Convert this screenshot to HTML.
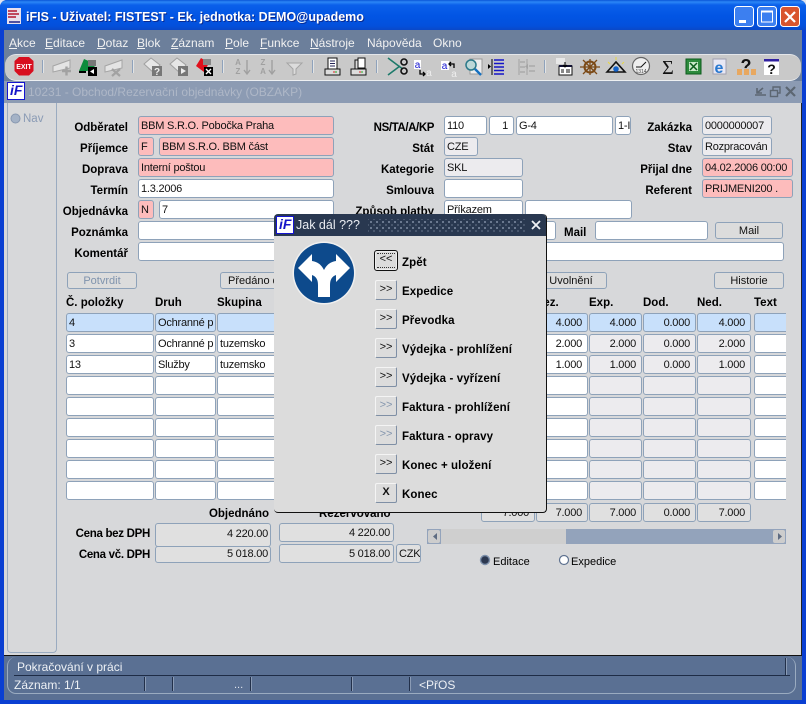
<!DOCTYPE html>
<html><head><meta charset="utf-8"><style>
html,body{margin:0;padding:0;background:#dfe4f0}
#w{position:relative;width:806px;height:704px;overflow:hidden;font:11px "Liberation Sans",sans-serif;color:#000}
#w div,#w span.a{position:absolute;box-sizing:border-box}
.f{border:1px solid #8ea2b9;border-radius:3px;height:19px;background:#fff;line-height:18px;padding-left:2px;white-space:nowrap;overflow:hidden;font-size:11px;letter-spacing:-.22px;color:#111}
.p{background:#fdbcbc}
.g{background:#ecebee}
.d{background:#e0e0e0}
.b{background:#c8e0fb}
.r{text-align:right;padding:0 5px 0 0}
.l{font-weight:bold;font-size:11.5px;text-align:right;white-space:nowrap;line-height:14px;height:14px}
.h{font-weight:bold;font-size:11.5px;white-space:nowrap;line-height:14px;height:14px;top:296px}
.m{top:36px;color:#f2f2f2;font-size:12px;line-height:14px;white-space:nowrap}
.bt{border:1px solid #8ea2b9;border-radius:3px;height:17px;line-height:16px;text-align:center;font-size:11px;background:#dcdcdc;white-space:nowrap;overflow:hidden;color:#111}
.db{left:375px;width:22px;height:20px;border:1px solid;border-color:#f4f4f4 #7f8fa5 #7f8fa5 #f4f4f4;border-radius:2px;background:#dcdcdc;text-align:center;font-size:11px;line-height:17px;color:#111}
.dl{left:402px;font-weight:bold;font-size:11.5px;line-height:14px;white-space:nowrap;letter-spacing:.1px}
.s{width:1px;background:#22304a;top:677px;height:14px;box-shadow:1px 0 0 #8a9bb5}
</style></head><body><div id="w">

<div style="left:0;top:0;width:806px;height:704px;background:#0a3fd2;border-radius:7px 7px 0 0"></div>
<div style="left:0;top:0;width:806px;height:30px;border-radius:7px 7px 0 0;background:linear-gradient(#0a55d8 0,#2b86f6 2px,#0a60ea 5px,#0255e4 16px,#0350dc 26px,#0a48c8 30px)"></div>
<div style="left:26px;top:9px;color:#fff;font-weight:bold;font-size:12.5px;line-height:16px;white-space:nowrap;text-shadow:1px 1px 0 #0a2a90">iFIS - Uživatel: FISTEST - Ek. jednotka: DEMO@upademo</div>

<div style="left:4px;top:30px;width:798px;height:24px;background:#6c7f9b"></div>
<div class="m" style="left:9px"><u>A</u>kce</div>
<div class="m" style="left:45px"><u>E</u>ditace</div>
<div class="m" style="left:97px"><u>D</u>otaz</div>
<div class="m" style="left:137px"><u>B</u>lok</div>
<div class="m" style="left:171px"><u>Z</u>áznam</div>
<div class="m" style="left:225px"><u>P</u>ole</div>
<div class="m" style="left:260px"><u>F</u>unkce</div>
<div class="m" style="left:310px"><u>N</u>ástroje</div>
<div class="m" style="left:367px">Nápověda</div>
<div class="m" style="left:433px">Okno</div>

<div style="left:4px;top:50px;width:798px;height:32px;background:#6c7f9b"></div>
<div style="left:5px;top:54px;width:796px;height:27px;background:#c9c9c9;border-radius:11px;border-bottom:1px solid #eef0f2;border-top:1px solid #e4e6ea"></div>

<div style="left:4px;top:81px;width:798px;height:22px;background:#8c9bb3"></div>
<div style="left:7px;top:82px;width:18px;height:18px;background:#fff;border:1px solid #1414d0"></div>
<div style="left:10px;top:82px;width:15px;height:17px;color:#1414c8;font:italic bold 14px/17px 'Liberation Sans',sans-serif">iF</div>
<div style="left:28px;top:85px;color:#aeb7c7;font-size:12px;line-height:14px;white-space:nowrap">10231 - Obchod/Rezervační objednávky (OBZAKP)</div>

<div style="left:4px;top:103px;width:798px;height:553px;background:#d7d8da;border-bottom:1px solid #111;border-right:1px solid #222"></div>
<div style="left:7px;top:103px;width:50px;height:550px;background:#d7d8da;border:1px solid #9aabc0;border-top:0;border-radius:0 0 4px 4px"></div>
<div style="left:23px;top:112px;color:#8a9bb5;font-size:11.5px;line-height:14px">Nav</div>

<div class="l" style="right:678px;top:121px">Odběratel</div>
<div class="l" style="right:678px;top:142px">Příjemce</div>
<div class="l" style="right:678px;top:163px">Doprava</div>
<div class="l" style="right:678px;top:184px">Termín</div>
<div class="l" style="right:678px;top:205px">Objednávka</div>
<div class="l" style="right:678px;top:226px">Poznámka</div>
<div class="l" style="right:678px;top:247px">Komentář</div>

<div class="f p" style="left:138px;top:116px;width:196px">BBM S.R.O. Pobočka Praha</div>
<div class="f p" style="left:138px;top:137px;width:16px">F</div>
<div class="f p" style="left:159px;top:137px;width:175px">BBM S.R.O. BBM část</div>
<div class="f p" style="left:138px;top:158px;width:196px">Interní poštou</div>
<div class="f" style="left:138px;top:179px;width:196px">1.3.2006</div>
<div class="f p" style="left:138px;top:200px;width:16px">N</div>
<div class="f" style="left:159px;top:200px;width:175px">7</div>
<div class="f" style="left:138px;top:221px;width:418px"></div>
<div class="f" style="left:138px;top:242px;width:646px"></div>

<div class="l" style="right:372px;top:121px;letter-spacing:-.4px">NS/TA/A/KP</div>
<div class="l" style="right:372px;top:142px">Stát</div>
<div class="l" style="right:372px;top:163px">Kategorie</div>
<div class="l" style="right:372px;top:184px">Smlouva</div>
<div class="l" style="right:372px;top:205px">Způsob platby</div>

<div class="f" style="left:444px;top:116px;width:43px">110</div>
<div class="f r" style="left:489px;top:116px;width:25px">1</div>
<div class="f" style="left:516px;top:116px;width:97px">G-4</div>
<div class="f" style="left:615px;top:116px;width:16px">1-I</div>
<div class="f g" style="left:444px;top:137px;width:34px">CZE</div>
<div class="f g" style="left:444px;top:158px;width:79px">SKL</div>
<div class="f" style="left:444px;top:179px;width:79px"></div>
<div class="f" style="left:444px;top:200px;width:79px">Příkazem</div>
<div class="f" style="left:525px;top:200px;width:107px"></div>

<div class="l" style="right:114px;top:121px">Zakázka</div>
<div class="l" style="right:114px;top:142px">Stav</div>
<div class="l" style="right:114px;top:163px">Přijal dne</div>
<div class="l" style="right:114px;top:184px">Referent</div>
<div class="l" style="left:564px;top:226px">Mail</div>
<div class="f g" style="left:702px;top:116px;width:70px">0000000007</div>
<div class="f g" style="left:702px;top:137px;width:70px">Rozpracován</div>
<div class="f p" style="left:702px;top:158px;width:91px">04.02.2006 00:00</div>
<div class="f p" style="left:702px;top:179px;width:91px">PRIJMENI200 .</div>
<div class="f" style="left:595px;top:221px;width:113px"></div>
<div class="bt" style="left:715px;top:222px;width:68px">Mail</div>

<div class="bt" style="left:67px;top:272px;width:70px;color:#7f93ad">Potvrdit</div>
<div class="bt" style="left:220px;top:272px;width:100px;text-align:left;padding-left:7px">Předáno do</div>
<div class="bt" style="left:520px;top:272px;width:87px;padding-left:15px">Uvolnění</div>
<div class="bt" style="left:714px;top:272px;width:70px">Historie</div>

<div class="h" style="left:66px">Č. položky</div>
<div class="h" style="left:155px">Druh</div>
<div class="h" style="left:217px">Skupina</div>
<div class="h" style="left:535px">Rez.</div>
<div class="h" style="left:589px">Exp.</div>
<div class="h" style="left:643px">Dod.</div>
<div class="h" style="left:697px">Ned.</div>
<div class="h" style="left:754px">Text</div>

<!-- row 1 -->
<div class="f b" style="left:66px;top:313px;width:88px">4</div><div class="f b" style="left:155px;top:313px;width:61px">Ochranné p</div><div class="f b" style="left:217px;top:313px;width:120px"></div><div class="f b r" style="left:530px;top:313px;width:58px">4.000</div><div class="f b r" style="left:589px;top:313px;width:53px">4.000</div><div class="f b r" style="left:643px;top:313px;width:53px">0.000</div><div class="f b r" style="left:697px;top:313px;width:54px">4.000</div><div class="f b" style="left:754px;top:313px;width:32px;border-right:0;border-radius:3px 0 0 3px"></div>
<!-- row 2 -->
<div class="f" style="left:66px;top:334px;width:88px">3</div><div class="f" style="left:155px;top:334px;width:61px">Ochranné p</div><div class="f" style="left:217px;top:334px;width:120px">tuzemsko</div><div class="f r" style="left:530px;top:334px;width:58px">2.000</div><div class="f g r" style="left:589px;top:334px;width:53px">2.000</div><div class="f g r" style="left:643px;top:334px;width:53px">0.000</div><div class="f g r" style="left:697px;top:334px;width:54px">2.000</div><div class="f" style="left:754px;top:334px;width:32px;border-right:0;border-radius:3px 0 0 3px"></div>
<!-- row 3 -->
<div class="f" style="left:66px;top:355px;width:88px">13</div><div class="f" style="left:155px;top:355px;width:61px">Služby</div><div class="f" style="left:217px;top:355px;width:120px">tuzemsko</div><div class="f r" style="left:530px;top:355px;width:58px">1.000</div><div class="f g r" style="left:589px;top:355px;width:53px">1.000</div><div class="f g r" style="left:643px;top:355px;width:53px">0.000</div><div class="f g r" style="left:697px;top:355px;width:54px">1.000</div><div class="f" style="left:754px;top:355px;width:32px;border-right:0;border-radius:3px 0 0 3px"></div>
<!-- empty rows -->
<div class="f" style="left:66px;top:376px;width:88px"></div><div class="f" style="left:155px;top:376px;width:61px"></div><div class="f" style="left:217px;top:376px;width:120px"></div><div class="f" style="left:530px;top:376px;width:58px"></div><div class="f g" style="left:589px;top:376px;width:53px"></div><div class="f g" style="left:643px;top:376px;width:53px"></div><div class="f g" style="left:697px;top:376px;width:54px"></div><div class="f" style="left:754px;top:376px;width:32px;border-right:0;border-radius:3px 0 0 3px"></div>
<div class="f" style="left:66px;top:397px;width:88px"></div><div class="f" style="left:155px;top:397px;width:61px"></div><div class="f" style="left:217px;top:397px;width:120px"></div><div class="f" style="left:530px;top:397px;width:58px"></div><div class="f g" style="left:589px;top:397px;width:53px"></div><div class="f g" style="left:643px;top:397px;width:53px"></div><div class="f g" style="left:697px;top:397px;width:54px"></div><div class="f" style="left:754px;top:397px;width:32px;border-right:0;border-radius:3px 0 0 3px"></div>
<div class="f" style="left:66px;top:418px;width:88px"></div><div class="f" style="left:155px;top:418px;width:61px"></div><div class="f" style="left:217px;top:418px;width:120px"></div><div class="f" style="left:530px;top:418px;width:58px"></div><div class="f g" style="left:589px;top:418px;width:53px"></div><div class="f g" style="left:643px;top:418px;width:53px"></div><div class="f g" style="left:697px;top:418px;width:54px"></div><div class="f" style="left:754px;top:418px;width:32px;border-right:0;border-radius:3px 0 0 3px"></div>
<div class="f" style="left:66px;top:439px;width:88px"></div><div class="f" style="left:155px;top:439px;width:61px"></div><div class="f" style="left:217px;top:439px;width:120px"></div><div class="f" style="left:530px;top:439px;width:58px"></div><div class="f g" style="left:589px;top:439px;width:53px"></div><div class="f g" style="left:643px;top:439px;width:53px"></div><div class="f g" style="left:697px;top:439px;width:54px"></div><div class="f" style="left:754px;top:439px;width:32px;border-right:0;border-radius:3px 0 0 3px"></div>
<div class="f" style="left:66px;top:460px;width:88px"></div><div class="f" style="left:155px;top:460px;width:61px"></div><div class="f" style="left:217px;top:460px;width:120px"></div><div class="f" style="left:530px;top:460px;width:58px"></div><div class="f g" style="left:589px;top:460px;width:53px"></div><div class="f g" style="left:643px;top:460px;width:53px"></div><div class="f g" style="left:697px;top:460px;width:54px"></div><div class="f" style="left:754px;top:460px;width:32px;border-right:0;border-radius:3px 0 0 3px"></div>
<div class="f" style="left:66px;top:481px;width:88px"></div><div class="f" style="left:155px;top:481px;width:61px"></div><div class="f" style="left:217px;top:481px;width:120px"></div><div class="f" style="left:530px;top:481px;width:58px"></div><div class="f g" style="left:589px;top:481px;width:53px"></div><div class="f g" style="left:643px;top:481px;width:53px"></div><div class="f g" style="left:697px;top:481px;width:54px"></div><div class="f" style="left:754px;top:481px;width:32px;border-right:0;border-radius:3px 0 0 3px"></div>

<!-- totals -->
<div class="f d r" style="left:481px;top:503px;width:54px">7.000</div>
<div class="f d r" style="left:536px;top:503px;width:52px">7.000</div>
<div class="f d r" style="left:589px;top:503px;width:53px">7.000</div>
<div class="f d r" style="left:643px;top:503px;width:53px">0.000</div>
<div class="f d r" style="left:697px;top:503px;width:54px">7.000</div>

<div class="l" style="right:537px;top:507px">Objednáno</div>
<div class="l" style="left:319px;top:507px">Rezervováno</div>
<div class="l" style="right:656px;top:527px;letter-spacing:-.3px">Cena bez DPH</div>
<div class="l" style="right:656px;top:548px;letter-spacing:-.3px">Cena vč. DPH</div>
<div class="f d r" style="left:155px;top:523px;width:116px;height:24px;line-height:21px;padding-right:2px">4 220.00</div>
<div class="f d r" style="left:155px;top:546px;width:116px;height:17px;line-height:15px;padding-right:2px">5 018.00</div>
<div class="f d r" style="left:279px;top:523px;width:115px;padding-right:3px">4 220.00</div>
<div class="f d r" style="left:279px;top:544px;width:115px;padding-right:3px">5 018.00</div>
<div class="f d" style="left:396px;top:544px;width:25px;padding-left:2px">CZK</div>

<!-- scrollbar -->
<div style="left:427px;top:529px;width:359px;height:15px;background:#93a3bb"></div>
<div style="left:441px;top:529px;width:125px;height:15px;background:#cfcfcf"></div>
<div style="left:427px;top:529px;width:14px;height:15px;background:#cdcdcd;border:1px solid #93a3bb;border-radius:3px"></div>
<div style="left:772px;top:529px;width:14px;height:15px;background:#cdcdcd;border:1px solid #93a3bb;border-radius:3px"></div>

<div style="left:493px;top:555px;font-size:11px;line-height:14px">Editace</div>
<div style="left:571px;top:555px;font-size:11px;line-height:14px">Expedice</div>

<!-- status -->
<div style="left:4px;top:656px;width:798px;height:44px;background:#5a7093"></div>
<div style="left:7px;top:657px;width:789px;height:37px;border:1px solid #9aabc0;border-top:0;border-radius:9px;border-top-color:transparent"></div>
<div style="left:14px;top:675px;width:776px;height:1px;background:#1e2c46"></div>
<div style="left:17px;top:660px;color:#eef1f5;font-size:12px;line-height:15px">Pokračování v práci</div>
<div style="left:14px;top:678px;color:#eef1f5;font-size:12px;line-height:15px">Záznam: 1/1</div>
<div style="left:234px;top:678px;color:#dfe4ec;font-size:11px;line-height:15px">...</div>
<div style="left:419px;top:678px;color:#eef1f5;font-size:12px;line-height:15px">&lt;PřOS</div>
<div class="s" style="left:144px"></div><div class="s" style="left:172px"></div><div class="s" style="left:250px"></div><div class="s" style="left:351px"></div><div class="s" style="left:409px"></div>
<div class="s" style="left:785px;top:658px;height:17px"></div>

<!-- icons + widgets -->
<svg style="position:absolute;left:0;top:0" width="806" height="704" viewBox="0 0 806 704" font-family="Liberation Sans">
<!-- app icon -->
<rect x="7" y="8" width="14" height="16" fill="#e8e0ee"/><path d="M8 11h9M8 14h11M8 17h8" stroke="#c04860" stroke-width="2"/><path d="M9 22h11" stroke="#5050a0" stroke-width="2"/>
<!-- window buttons -->
<rect x="734.500" y="6.500" width="19" height="20" rx="3" fill="#3c7ff0" stroke="#fff"/><rect x="739" y="20" width="7" height="3" fill="#fff"/>
<rect x="757.500" y="6.500" width="19" height="20" rx="3" fill="#3c7ff0" stroke="#fff"/><rect x="761.500" y="11" width="11" height="11" fill="none" stroke="#fff"/><path d="M761 11.500h12" stroke="#fff" stroke-width="2"/>
<rect x="780.500" y="6.500" width="19" height="20" rx="3" fill="#d9552e" stroke="#fff"/><path d="M785 12l10 10M795 12l-10 10" stroke="#fff" stroke-width="2.200"/>
<!-- mdi buttons -->
<path d="M757 93l6-5M757 88v5h5M755 95h11" stroke="#5c6672" stroke-width="1.600" fill="none"/>
<rect x="770.500" y="90.500" width="7" height="6" fill="none" stroke="#5c6672" stroke-width="1.400"/><path d="M773 90v-3h7v6h-2" fill="none" stroke="#5c6672" stroke-width="1.400"/>
<path d="M786 87l9 9M795 87l-9 9" stroke="#5c6672" stroke-width="2.200"/>
<!-- toolbar separators -->
<path d="M43 60v13M133 60v13M223 60v13M313 60v13M377 60v13M545 60v13" stroke="#f4f6f8" stroke-width="1.200"/><path d="M42.500 60v13M132.500 60v13M222.500 60v13M312.500 60v13M376.500 60v13M544.500 60v13" stroke="#8fa2bb"/>
<!-- exit -->
<polygon points="19,57 29,57 33.500,61 33.500,71 29,75.500 19,75.500 14.500,71 14.500,61" fill="#d80f1f"/><text x="24" y="69" font-size="7" font-weight="bold" fill="#fff" text-anchor="middle">EXIT</text>
<!-- add / green / del -->
<path d="M53 66l17-6v8l-17 4z" fill="#e4e4e4" stroke="#a5a5a5"/><path d="M62 71h9M66.500 66.500v9" stroke="#a2a2a2" stroke-width="2.400"/>
<path d="M79 71l5-12 7 3 5 2-3 5-6 2z" fill="#0c8c3c"/><path d="M79 72h7" stroke="#000" stroke-width="2"/><rect x="88" y="67" width="9" height="9" fill="#000"/><path d="M94 69v5l-4-2.500z" fill="#fff"/><rect x="88" y="60" width="8" height="6" fill="#777"/>
<path d="M105 66l17-6v8l-17 4z" fill="#e4e4e4" stroke="#a5a5a5"/><path d="M112 69l8 7M120 69l-8 7" stroke="#a2a2a2" stroke-width="2.200"/>
<!-- grey doc pair + red -->
<path d="M144 64l7-6 9 7-6 8z" fill="#e6e6e6" stroke="#a0a0a0"/><rect x="152" y="66" width="10" height="10" fill="#777"/><text x="157" y="75" font-size="10" font-weight="bold" fill="#eee" text-anchor="middle">?</text>
<path d="M170 64l7-6 9 7-6 8z" fill="#e6e6e6" stroke="#a0a0a0"/><rect x="178" y="66" width="10" height="10" fill="#777"/><path d="M181 68v6l5-3z" fill="#eee"/>
<path d="M196 66l5-8 8 5-5 9z" fill="#e0101c"/><rect x="203" y="59" width="8" height="6" fill="#888"/><rect x="204" y="67" width="9" height="9" fill="#000"/><path d="M206 69l5 5M211 69l-5 5" stroke="#fff" stroke-width="1.400"/>
<!-- sort -->
<text x="238" y="65" font-size="8" font-weight="bold" fill="#a0a0a0" text-anchor="middle">A</text><text x="238" y="74" font-size="8" font-weight="bold" fill="#a0a0a0" text-anchor="middle">Z</text><path d="M247 60v13M244 70l3 4 3-4" stroke="#a0a0a0" stroke-width="1.400" fill="none"/>
<text x="263" y="65" font-size="8" font-weight="bold" fill="#a0a0a0" text-anchor="middle">Z</text><text x="263" y="74" font-size="8" font-weight="bold" fill="#a0a0a0" text-anchor="middle">A</text><path d="M272 60v13M269 70l3 4 3-4" stroke="#a0a0a0" stroke-width="1.400" fill="none"/>
<path d="M287 63h15l-6 6v5l-3 1v-6z" fill="#dcdcdc" stroke="#a5a5a5"/>
<!-- printers -->
<rect x="328" y="58" width="9" height="11" fill="#fff" stroke="#111"/><path d="M330 61h5M330 63.500h5M330 66h5" stroke="#225" stroke-width="1"/><rect x="325" y="69" width="15" height="6" fill="#ddd" stroke="#111"/><path d="M333 72h2" stroke="#d22"/><path d="M335 72h2" stroke="#2a2"/>
<rect x="355" y="60" width="8" height="9" fill="#ddd" stroke="#111"/><rect x="358" y="58" width="7" height="10" fill="#fff" stroke="#111"/><rect x="351" y="69" width="15" height="6" fill="#ddd" stroke="#111"/><path d="M359 72h2" stroke="#d22"/><path d="M361 72h2" stroke="#2a2"/>
<!-- scissors -->
<path d="M388 58l12 9 3 2M388 75l12-9" stroke="#1d7a6a" stroke-width="1.600" fill="none"/><circle cx="404" cy="62" r="3" fill="none" stroke="#111" stroke-width="1.600"/><circle cx="404" cy="71" r="3" fill="none" stroke="#111" stroke-width="1.600"/>
<!-- a icons -->
<rect x="414" y="60" width="7" height="9" fill="#fff"/><text x="417.500" y="68" font-size="10" fill="#1414d0" text-anchor="middle">a</text><path d="M420 70v4h5M423 72l2 2-2 2" stroke="#000" stroke-width="1.300" fill="none"/><text x="429" y="76" font-size="10" fill="#eee" text-anchor="middle">a</text>
<rect x="441" y="61" width="8" height="9" fill="#fff"/><text x="444.500" y="69" font-size="10" fill="#1414d0" text-anchor="middle">a</text><path d="M449 64h5v4M451 62l-2 2 2 2" stroke="#000" stroke-width="1.300" fill="none"/><text x="454" y="77" font-size="10" fill="#eee" text-anchor="middle">a</text>
<!-- magnifier -->
<rect x="470" y="59" width="12" height="15" fill="#eee" stroke="#999"/><circle cx="471" cy="65" r="5" fill="#bcd8d8" stroke="#2c7a8a" stroke-width="1.500"/><path d="M475 69l6 6" stroke="#1470c0" stroke-width="2.400"/>
<!-- list -->
<path d="M492 59v16" stroke="#000"/><path d="M488 64v5l3-2.500z" fill="#000"/><path d="M494 60h10M494 63.500h10M494 67h10M494 70.500h10M494 74h10" stroke="#1414c8" stroke-width="1.400"/>
<path d="M519 59v16M527 59v16" stroke="#a4a4a4"/><path d="M520 62h5M520 67h5M520 72h5M529 66h6M529 71h6" stroke="#a4a4a4" stroke-width="1.300"/><path d="M528 64v5l-3-2.500z" fill="#a4a4a4"/>
<!-- form icon -->
<rect x="556" y="58" width="9" height="6" fill="#e8e8e8"/><rect x="559" y="66" width="13" height="9" fill="#fff" stroke="#111"/><path d="M559 66h13" stroke="#113" stroke-width="2"/><path d="M565 62v5M563 65l2 2 2-2" stroke="#000" fill="none"/><path d="M561 70h3M561 72h3M566 70h4M566 72h4" stroke="#111"/>
<!-- helm -->
<circle cx="590" cy="67" r="5.500" fill="none" stroke="#7c4a16" stroke-width="2"/><path d="M583 60l14 14M597 60l-14 14M580 67h20M590 59v16" stroke="#7c4a16" stroke-width="1.300"/>
<!-- triangle -->
<path d="M607 72l9-10 9 10z" fill="#d0d0d0" stroke="#111" stroke-width="1.600"/><circle cx="616" cy="69" r="2.800" fill="#1462c8"/><path d="M608 62l2 2M624 62l-2 2M616 57v3" stroke="#e8d840"/>
<!-- clock -->
<circle cx="641" cy="66" r="8.500" fill="#eee" stroke="#666" stroke-width="1.200"/><path d="M636 67h5l5-5" stroke="#111" fill="none"/><text x="641" y="73" font-size="5" fill="#444" text-anchor="middle">1314</text>
<!-- sigma -->
<text x="668" y="74" font-size="20" fill="#111" text-anchor="middle" font-family="Liberation Serif">Σ</text>
<!-- excel -->
<rect x="686" y="59" width="15" height="15" fill="#2c8a3c" stroke="#0c5c1c"/><rect x="689" y="62" width="9" height="9" fill="#c8e8c8"/><path d="M690 63l7 7M697 63l-7 7" stroke="#0c5c1c" stroke-width="1.500"/>
<!-- ie -->
<rect x="713" y="59" width="13" height="15" fill="#e8e8f4" stroke="#a0a0b0"/><text x="719" y="73" font-size="16" font-weight="bold" fill="#2878d0" text-anchor="middle">e</text>
<!-- help -->
<text x="746" y="72" font-size="18" font-weight="bold" fill="#111" text-anchor="middle">?</text><rect x="737" y="69" width="5" height="6" fill="#e8a860"/><rect x="744" y="69" width="5" height="6" fill="#e8a860"/><rect x="751" y="69" width="5" height="6" fill="#e8a860"/>
<rect x="764" y="60" width="15" height="15" fill="#fff"/><rect x="764" y="59" width="15" height="2.500" fill="#3020a0"/><text x="771.500" y="74" font-size="14" font-weight="bold" fill="#111" text-anchor="middle">?</text>
<!-- nav radio -->
<circle cx="15.500" cy="118.500" r="4.500" fill="#a4b2c6" stroke="#8898b0"/>
<!-- scroll arrows -->
<path d="M437 533v7l-4-3.500z" fill="#5e6c82"/><path d="M778 533v7l4-3.500z" fill="#5e6c82"/>
<!-- radios -->
<circle cx="485" cy="560" r="4.500" fill="#2c3850" stroke="#7d90ab" stroke-width="1.400"/>
<circle cx="564" cy="560" r="4.500" fill="#fff" stroke="#5e7290" stroke-width="1.200"/>
</svg>

<!-- dialog -->
<div style="left:274px;top:214px;width:273px;height:299px;background:#dcdcdc;border-right:1px solid #111;border-bottom:1px solid #111;border-radius:4px"></div>
<div style="left:274px;top:214px;width:272px;height:22px;background:#293850;border-radius:4px 4px 0 0"></div>
<div style="left:276px;top:216px;width:18px;height:18px;background:#fff;border:1px solid #1414d0"></div>
<div style="left:279px;top:216px;width:15px;height:17px;color:#1414c8;font:italic bold 14px/17px 'Liberation Sans',sans-serif">iF</div>
<div style="left:296px;top:218px;color:#e8ebf0;font-size:12.500px;line-height:15px;white-space:nowrap">Jak dál ???</div>
<div style="left:368px;top:219px;width:158px;height:13px;background-image:radial-gradient(#76839a 1px,transparent 1.100px),radial-gradient(#4e5c72 1px,transparent 1.100px);background-size:6px 6px;background-position:0 0,3px 3px"></div>
<svg style="position:absolute;left:274px;top:214px" width="273" height="100" viewBox="274 214 273 100">
<path d="M532 221l8 8M540 221l-8 8" stroke="#f0f2f5" stroke-width="1.800"/>
<circle cx="324" cy="273" r="31.500" fill="#f0f0f0"/><circle cx="324" cy="273" r="30" fill="#0d4a8c"/>
<path d="M318 297V285Q318 277 312 275V282L298 268 312 254V261Q320 262 324 270 328 262 336 261V254L350 268 336 282V275Q330 277 330 285V297Z" fill="#fff"/>
</svg>
<div class="db" style="left:374px;top:250px;width:24px;height:21px;border:1px solid #111;border-radius:3px;box-shadow:inset 0 0 0 1px #eee;background:#dcdcdc">&lt;&lt;</div>
<div style="left:377px;top:253px;width:18px;height:15px;border-top:1px dotted #333;border-bottom:1px dotted #333"></div>
<div class="db" style="top:280px">&gt;&gt;</div>
<div class="db" style="top:309px">&gt;&gt;</div>
<div class="db" style="top:338px">&gt;&gt;</div>
<div class="db" style="top:367px">&gt;&gt;</div>
<div class="db" style="top:396px;color:#8496ae">&gt;&gt;</div>
<div class="db" style="top:425px;color:#8496ae">&gt;&gt;</div>
<div class="db" style="top:454px">&gt;&gt;</div>
<div class="db" style="top:483px;font-weight:bold">X</div>
<div class="dl" style="top:256px">Zpět</div>
<div class="dl" style="top:285px">Expedice</div>
<div class="dl" style="top:314px">Převodka</div>
<div class="dl" style="top:343px">Výdejka - prohlížení</div>
<div class="dl" style="top:372px">Výdejka - vyřízení</div>
<div class="dl" style="top:401px">Faktura - prohlížení</div>
<div class="dl" style="top:430px">Faktura - opravy</div>
<div class="dl" style="top:459px">Konec + uložení</div>
<div class="dl" style="top:488px">Konec</div>

</div></body></html>
